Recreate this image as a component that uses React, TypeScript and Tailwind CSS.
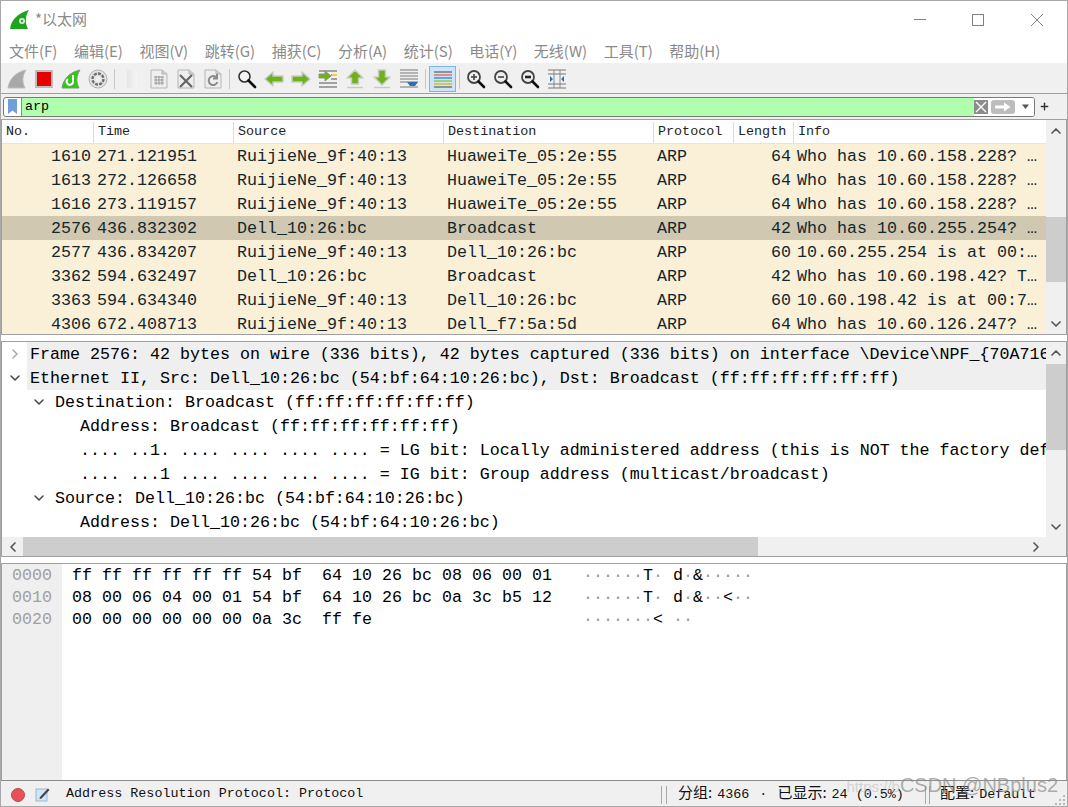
import React from "react";
import { ChevronLeft, ChevronRight, ChevronUp, ChevronDown, Plus } from "lucide-react";

const mono = "font-['Consolas','Liberation_Mono','DejaVu_Sans_Mono',monospace]";
const cols = ["w-[92px]", "w-[140px]", "w-[210px]", "w-[210px]", "w-[80px]", "w-[60px]"];

const packets: [string, string, string, string, string, string, string, boolean?][] = [
  ["1610", "271.121951", "RuijieNe_9f:40:13", "HuaweiTe_05:2e:55", "ARP", "64", "Who has 10.60.158.228? …"],
  ["1613", "272.126658", "RuijieNe_9f:40:13", "HuaweiTe_05:2e:55", "ARP", "64", "Who has 10.60.158.228? …"],
  ["1616", "273.119157", "RuijieNe_9f:40:13", "HuaweiTe_05:2e:55", "ARP", "64", "Who has 10.60.158.228? …"],
  ["2576", "436.832302", "Dell_10:26:bc", "Broadcast", "ARP", "42", "Who has 10.60.255.254? …", true],
  ["2577", "436.834207", "RuijieNe_9f:40:13", "Dell_10:26:bc", "ARP", "60", "10.60.255.254 is at 00:…"],
  ["3362", "594.632497", "Dell_10:26:bc", "Broadcast", "ARP", "42", "Who has 10.60.198.42? T…"],
  ["3363", "594.634340", "RuijieNe_9f:40:13", "Dell_10:26:bc", "ARP", "60", "10.60.198.42 is at 00:7…"],
  ["4306", "672.408713", "RuijieNe_9f:40:13", "Dell_f7:5a:5d", "ARP", "64", "Who has 10.60.126.247? …"],
];

const Shark = ({ color, dark }: { color: string; dark: string }) => (
  <svg width="20" height="20" viewBox="0 0 20 20">
    <path d="M1 19 C2 10 9 3 19 1 C15 7 15 13 18 19 Z" fill={color} stroke={dark} strokeWidth="1" />
  </svg>
);

const Doc = ({ children }: { children?: React.ReactNode }) => (
  <svg width="18" height="20" viewBox="0 0 18 20">
    <path d="M1 1 H12 L17 5 V19 H1 Z" fill="#eeeeee" stroke="#b5b5b5" />
    <path d="M12 1 V5 H17" fill="#cccccc" stroke="#b5b5b5" />
    {children}
  </svg>
);

const Arrow = ({ d }: { d: string }) => (
  <svg width="20" height="20" viewBox="0 0 20 20">
    <path d={d} fill="#6fb01e" stroke="#c9cdbd" strokeWidth="1.5" strokeLinejoin="round" />
  </svg>
);

const Lens = ({ sign }: { sign: "+" | "-" | "=" }) => (
  <svg width="20" height="20" viewBox="0 0 20 20">
    <circle cx="8" cy="8" r="6" fill="#eeeeee" stroke="#444444" strokeWidth="1.8" />
    <path d="M12.5 12.5 L18 18" stroke="#111111" strokeWidth="2.6" strokeLinecap="round" />
    <path d="M5 8 H11" stroke="#444444" strokeWidth="1.6" />
    {sign === "+" && <path d="M8 5 V11" stroke="#444444" strokeWidth="1.6" />}
    {sign === "=" && <path d="M5 8 H11" stroke="#222222" strokeWidth="2.6" />}
  </svg>
);

const Lines = ({ children }: { children?: React.ReactNode }) => (
  <svg width="20" height="20" viewBox="0 0 20 20">
    {[2, 6, 10, 14, 18].map((y) => (
      <path key={y} d={`M1 ${y} H19`} stroke="#555555" strokeWidth="1" />
    ))}
    {children}
  </svg>
);

const Btn = ({ children, active }: { children: React.ReactNode; active?: boolean }) => (
  <div className={`flex h-[26px] w-[27px] shrink-0 items-center justify-center ${active ? "border border-[#7eb4ea] bg-[#cde4f7]" : ""}`}>
    {children}
  </div>
);
const Sep = () => <div className="mx-[3px] h-[20px] w-px shrink-0 bg-[#c8c8c8]" />;

const Toolbar = () => (
  <div className="flex h-[30px] shrink-0 items-center border-b border-[#a0a0a0] bg-[#f0f0f0] pl-[2px]">
    <Btn><Shark color="#a8a8a8" dark="#bdbdbd" /></Btn>
    <Btn><div className="h-[18px] w-[18px] border-2 border-[#bdbdbd] bg-[#e60000]" /></Btn>
    <Btn>
      <svg width="20" height="20" viewBox="0 0 20 20">
        <path d="M1 19 C2 10 9 3 19 1 C15 7 15 13 18 19 Z" fill="#35c41e" stroke="#7a9b70" />
        <path d="M12 6 V12 A3.2 3.2 0 1 1 7 10" fill="none" stroke="#ffffff" strokeWidth="2" />
      </svg>
    </Btn>
    <Btn>
      <svg width="20" height="20" viewBox="0 0 20 20">
        <circle cx="10" cy="10" r="9" fill="#e4e4e4" stroke="#b0b0b0" />
        <circle cx="10" cy="10" r="5.5" fill="none" stroke="#6e6e6e" strokeWidth="2.4" strokeDasharray="3 1.2" />
        <circle cx="10" cy="10" r="2.6" fill="#efefef" />
      </svg>
    </Btn>
    <Sep />
    <Btn><div className="h-[18px] w-[10px] bg-gradient-to-r from-[#e6e6e6] to-[#f5f5f5]" /></Btn>
    <Btn>
      <Doc>
        <path d="M4 8 H14 M4 11 H14 M4 14 H14 M6 7 V16 M9 7 V16 M12 7 V16" stroke="#9a9a9a" strokeWidth="1" />
      </Doc>
    </Btn>
    <Btn>
      <Doc><path d="M3 6 L15 18 M15 6 L3 18" stroke="#666666" strokeWidth="2.2" /></Doc>
    </Btn>
    <Btn>
      <Doc><path d="M13 9 A4.5 4.5 0 1 0 13.5 13 M13 5 V9.5 H9" fill="none" stroke="#8a8a8a" strokeWidth="2" /></Doc>
    </Btn>
    <Sep />
    <Btn>
      <svg width="20" height="20" viewBox="0 0 20 20">
        <circle cx="7.5" cy="7.5" r="5.5" fill="#f4f4f4" stroke="#333333" strokeWidth="1.6" />
        <path d="M11.5 11.5 L18 18" stroke="#111111" strokeWidth="2.6" strokeLinecap="round" />
      </svg>
    </Btn>
    <Btn><Arrow d="M1 10 L9 3 V7 H19 V13 H9 V17 Z" /></Btn>
    <Btn><Arrow d="M19 10 L11 3 V7 H1 V13 H11 V17 Z" /></Btn>
    <Btn>
      <Lines>
        <rect x="1" y="3" width="12" height="8" fill="#f5f5f5" />
        <path d="M13 7 L7 2 V5 H1 V9 H7 V12 Z" fill="#6fb01e" stroke="#8a9a60" />
        <path d="M14 6 H19" stroke="#f1d23a" strokeWidth="2" />
      </Lines>
    </Btn>
    <Btn><Arrow d="M10 1 L18 9 H13.5 V15 H6.5 V9 H2 Z M2 18.5 H18" /></Btn>
    <Btn><Arrow d="M10 16 L18 8 H13.5 V1 H6.5 V8 H2 Z M2 18.5 H18" /></Btn>
    <Btn>
      <svg width="20" height="20" viewBox="0 0 20 20">
        {[1, 4, 7, 10, 13, 18].map((y) => (
          <path key={y} d={`M1 ${y} H19`} stroke="#777777" strokeWidth="1" />
        ))}
        <path d="M8 13 H19 L16 17 H11 Z" fill="#2f6fae" />
      </svg>
    </Btn>
    <Sep />
    <Btn active>
      <svg width="20" height="20" viewBox="0 0 20 20">
        <path d="M1 3 H19" stroke="#444444" strokeWidth="1" />
        <path d="M1 6 H19" stroke="#e06a5a" strokeWidth="1.4" />
        <path d="M1 9 H19" stroke="#3f86c8" strokeWidth="1.4" />
        <path d="M1 12 H19" stroke="#8ac63a" strokeWidth="1.4" />
        <path d="M1 15 H19" stroke="#dbb62c" strokeWidth="1.4" />
        <path d="M1 18 H19" stroke="#444444" strokeWidth="1" />
      </svg>
    </Btn>
    <div className="ml-[3px] mr-[2px] h-[20px] w-px shrink-0 bg-[#c8c8c8]" />
    <Btn><Lens sign="+" /></Btn>
    <Btn><Lens sign="-" /></Btn>
    <Btn><Lens sign="=" /></Btn>
    <Btn>
      <svg width="20" height="20" viewBox="0 0 20 20">
        {[1, 5, 15, 19].map((y) => (
          <path key={y} d={`M1 ${y} H19`} stroke="#777777" strokeWidth="1" />
        ))}
        <path d="M7 1 V19 M13 1 V19" stroke="#8a8a8a" strokeWidth="1" />
        <path d="M3 7 L6 10 L3 13 Z M17 7 L14 10 L17 13 Z" fill="#2f6fae" />
      </svg>
    </Btn>
  </div>
);

const FilterBar = () => (
  <div className="flex h-[25px] shrink-0 items-center bg-[#f0f0f0] pl-[2px]">
    <div className="flex h-[20px] w-[1032px] items-stretch overflow-hidden rounded-[3px] border border-[#7a7a7a] bg-white">
      <div className="flex w-[18px] shrink-0 items-center justify-center border-r border-[#8a8a8a]">
        <svg width="9" height="15" viewBox="0 0 9 15"><path d="M0 0 H9 V15 L4.5 11.5 L0 15 Z" fill="#6f9fd8" /></svg>
      </div>
      <div className="flex flex-1 items-center bg-[#afffaf] pl-[3px] pt-[1px] text-[13.4px] text-black font-['Liberation_Mono',monospace]">arp</div>
      <div className="flex w-[60px] shrink-0 items-center bg-white">
        <div className="flex h-[14px] w-[14px] items-center justify-center bg-[#8c8c8c]">
          <svg width="12" height="12" viewBox="0 0 12 12"><path d="M1 1 L11 11 M11 1 L1 11" stroke="#ffffff" strokeWidth="1.4" /></svg>
        </div>
        <div className="ml-[3px] flex h-[14px] w-[24px] items-center justify-center rounded-[3px] bg-[#bdbdbd]">
          <svg width="16" height="10" viewBox="0 0 16 10"><path d="M0 3.5 H9 V0.5 L15.5 5 L9 9.5 V6.5 H0 Z" fill="#ffffff" /></svg>
        </div>
        <svg className="ml-[6px]" width="9" height="6" viewBox="0 0 9 6"><path d="M1 0.5 H8 L4.5 5 Z" fill="#555555" /></svg>
      </div>
    </div>
    <Plus size={11} strokeWidth={3} className="ml-[4px] text-[#333333]" />
  </div>
);

const VScroll = ({ spacer, thumb }: { spacer: string; thumb: string }) => (
  <div className="flex w-[20px] shrink-0 flex-col bg-[#f0f0f0]">
    <div className="flex h-[22px] shrink-0 items-center justify-center"><ChevronUp size={16} strokeWidth={2.5} className="text-[#555555]" /></div>
    <div className={`${spacer} shrink-0`} />
    <div className={`${thumb} shrink-0 bg-[#cdcdcd]`} />
    <div className="flex-1" />
    <div className="flex h-[20px] shrink-0 items-center justify-center"><ChevronDown size={16} strokeWidth={2.5} className="text-[#555555]" /></div>
  </div>
);

const PacketList = () => (
  <div className="flex h-[216px] shrink-0 border border-[#a0a0a0] bg-white">
    <div className="min-w-0 flex-1 overflow-hidden">
      <div className="flex h-[24px] border-b border-[#e4e4e4] pt-[2px] text-[13.4px] text-[#222222] font-['Liberation_Mono',monospace]">
        {["No.", "Time", "Source", "Destination", "Protocol", "Length"].map((h, i) => (
          <div key={h} className={`${cols[i]} flex shrink-0 items-center border-r border-[#dcdcdc] pl-[4px]`}>{h}</div>
        ))}
        <div className="flex flex-1 items-center pl-[4px]">Info</div>
      </div>
      {packets.map((p) => (
        <div key={p[0]} className={`flex h-[24px] items-center whitespace-pre text-[16.67px] text-[#12272e] ${mono} ${p[7] ? "bg-[#d0c8b0]" : "bg-[#faf0d7]"}`}>
          <div className={`${cols[0]} shrink-0 pr-[3px] text-right`}>{p[0]}</div>
          <div className={`${cols[1]} shrink-0 pl-[3px]`}>{p[1]}</div>
          <div className={`${cols[2]} shrink-0 pl-[3px]`}>{p[2]}</div>
          <div className={`${cols[3]} shrink-0 pl-[3px]`}>{p[3]}</div>
          <div className={`${cols[4]} shrink-0 pl-[3px]`}>{p[4]}</div>
          <div className={`${cols[5]} shrink-0 pr-[3px] text-right`}>{p[5]}</div>
          <div className="min-w-0 flex-1 pl-[3px]">{p[6]}</div>
        </div>
      ))}
    </div>
    <VScroll spacer="h-[75px]" thumb="h-[65px]" />
  </div>
);

const details: { text: string; level: number; open?: boolean; hl?: boolean }[] = [
  { text: "Frame 2576: 42 bytes on wire (336 bits), 42 bytes captured (336 bits) on interface \\Device\\NPF_{70A716", level: 0, open: false, hl: true },
  { text: "Ethernet II, Src: Dell_10:26:bc (54:bf:64:10:26:bc), Dst: Broadcast (ff:ff:ff:ff:ff:ff)", level: 0, open: true, hl: true },
  { text: "Destination: Broadcast (ff:ff:ff:ff:ff:ff)", level: 1, open: true },
  { text: "Address: Broadcast (ff:ff:ff:ff:ff:ff)", level: 2 },
  { text: ".... ..1. .... .... .... .... = LG bit: Locally administered address (this is NOT the factory def", level: 2 },
  { text: ".... ...1 .... .... .... .... = IG bit: Group address (multicast/broadcast)", level: 2 },
  { text: "Source: Dell_10:26:bc (54:bf:64:10:26:bc)", level: 1, open: true },
  { text: "Address: Dell_10:26:bc (54:bf:64:10:26:bc)", level: 2 },
];
const levelPad = ["pl-[5px]", "pl-[29px]", "pl-[29px]"];
const levelText = ["w-[23px]", "w-[24px]", "w-[49px]"];

const Details = () => (
  <div className="mt-[6px] flex h-[216px] shrink-0 flex-col border border-[#a0a0a0] bg-white">
    <div className="flex min-h-0 flex-1">
      <div className="min-w-0 flex-1 overflow-hidden">
        {details.map((d, i) => (
          <div key={i} className={`flex h-[24px] items-center whitespace-pre text-[16.67px] text-[#000000] ${mono} ${levelPad[d.level]}`}>
            <div className={`${levelText[d.level]} flex shrink-0 items-center`}>
              {d.open === true && <ChevronDown size={16} strokeWidth={2.2} className="text-[#444444]" />}
              {d.open === false && <ChevronRight size={16} strokeWidth={2.2} className="text-[#a8a8a8]" />}
            </div>
            <div className={`min-w-0 flex-1 overflow-hidden ${d.hl ? "-ml-[3px] flex h-full items-center bg-[#efefef] pl-[3px]" : ""}`}>{d.text}</div>
          </div>
        ))}
      </div>
      <VScroll spacer="h-0" thumb="h-[86px]" />
    </div>
    <div className="flex h-[19px] shrink-0 bg-[#f0f0f0]">
      <div className="flex w-[21px] shrink-0 items-center justify-center"><ChevronLeft size={16} strokeWidth={2.5} className="text-[#555555]" /></div>
      <div className="w-[735px] shrink-0 bg-[#cdcdcd]" />
      <div className="flex-1" />
      <div className="flex w-[20px] shrink-0 items-center justify-center"><ChevronRight size={16} strokeWidth={2.5} className="text-[#555555]" /></div>
      <div className="w-[20px] shrink-0" />
    </div>
  </div>
);

const hexRows: [string, string, string][] = [
  ["0000", "ff ff ff ff ff ff 54 bf", "64 10 26 bc 08 06 00 01"],
  ["0010", "08 00 06 04 00 01 54 bf", "64 10 26 bc 0a 3c b5 12"],
  ["0020", "00 00 00 00 00 00 0a 3c", "ff fe"],
];
const asciiRows = ["······T· d·&·····", "······T· d·&··<··", "·······< ··"];

const Hex = () => (
  <div className="mt-[6px] flex min-h-0 flex-1 flex-col border-x border-t border-[#a0a0a0] bg-white">
    <div className="flex min-h-0 flex-1">
      <div className="w-[60px] shrink-0 bg-[#efefef] pl-[10px] pt-[1px]">
        {hexRows.map((r) => (
          <div key={r[0]} className={`h-[22px] text-[16.67px] leading-[22px] text-[#a0a0a0] ${mono}`}>{r[0]}</div>
        ))}
      </div>
      <div className="min-w-0 flex-1 pl-[10px] pt-[1px]">
        {hexRows.map((r, i) => (
          <div key={r[0]} className={`flex h-[22px] whitespace-pre text-[16.67px] leading-[22px] text-[#000000] ${mono}`}>
            <div className="w-[250px] shrink-0">{r[1]}</div>
            <div className="w-[261px] shrink-0">{r[2]}</div>
            <div>
              {asciiRows[i].split("").map((c, j) => (
                <span key={j} className={c === "·" ? "text-[#9a9a9a]" : "text-[#000000]"}>{c}</span>
              ))}
            </div>
          </div>
        ))}
      </div>
    </div>
  </div>
);

const Cjk = ({ children }: { children: React.ReactNode }) => (
  <span className="font-['Noto_Sans_CJK_SC',sans-serif] text-[15px] leading-[18px]">{children}</span>
);

const StatusBar = () => (
  <div className="relative flex h-[26px] shrink-0 items-center border-t border-[#8c8c8c] bg-[#f0f0f0] pt-[2px] text-[13.4px] text-[#111111] font-['Liberation_Mono',monospace]">
    <div className="ml-[10px] h-[14px] w-[14px] rounded-full border border-[#b84a4a] bg-[#e8505a]" />
    <div className="ml-[10px] w-[16px] shrink-0">
      <svg width="15" height="15" viewBox="0 0 15 15">
        <rect x="1" y="2" width="11" height="12" fill="#cfe4f5" stroke="#9ab8d0" />
        <path d="M5 10 L13 1.5 L14.5 3 L6.5 11.5 L4.5 12 Z" fill="#444444" />
      </svg>
    </div>
    <div className="ml-[15px] w-[595px] shrink-0 whitespace-pre">Address Resolution Protocol: Protocol</div>
    <div className="h-[18px] w-[6px] shrink-0 border-x border-[#a8a8a8]" />
    <div className="ml-[11px] flex w-[247px] shrink-0 items-baseline whitespace-pre">
      <Cjk>分组:</Cjk><span className="ml-[5px]">4366</span><span className="mx-[10px]">·</span><Cjk>已显示:</Cjk><span className="ml-[5px]">24 (0.5%)</span>
    </div>
    <div className="h-[18px] w-[5px] shrink-0 border-x border-[#a8a8a8]" />
    <div className="ml-[10px] flex items-baseline whitespace-pre"><Cjk>配置:</Cjk><span className="ml-[5px]">Default</span></div>
    <div className="pointer-events-none absolute right-[9px] top-[-10px] flex items-baseline font-['Liberation_Sans',sans-serif] leading-[28px]">
      <span className="text-[15px] text-[#b4b4b4]/50">https://b</span>
      <span className="text-[20px] text-[#8c8c8c]/70">CSDN @NBplus2</span>
    </div>
    <svg className="absolute bottom-[1px] right-[1px]" width="12" height="12" viewBox="0 0 12 12">
      <path d="M9 2 h2 v2 h-2 Z M5 6 h2 v2 h-2 Z M9 6 h2 v2 h-2 Z M1 10 h2 v2 h-2 Z M5 10 h2 v2 h-2 Z M9 10 h2 v2 h-2 Z" fill="#b8b8b8" />
    </svg>
  </div>
);

const menus = ["文件(F)", "编辑(E)", "视图(V)", "跳转(G)", "捕获(C)", "分析(A)", "统计(S)", "电话(Y)", "无线(W)", "工具(T)", "帮助(H)"];

export default function App() {
  return (
    <div className="flex h-[807px] w-[1068px] flex-col overflow-hidden border border-[#a8a8a8] bg-white font-['Noto_Sans_CJK_SC',sans-serif]">
      <div className="flex h-[37px] shrink-0 items-center pl-[9px]">
        <svg width="20" height="20" viewBox="0 0 20 20">
          <path d="M0 19 C1 10 8 3 19 0 C15 6 15 13 18 19 Z" fill="#1ea51e" />
          <circle cx="12" cy="11" r="3" fill="#d8efd8" />
          <circle cx="12" cy="11" r="1.2" fill="#1ea51e" />
        </svg>
        <span className="ml-[5px] text-[15px] text-[#8a8a8a]">*以太网</span>
        <div className="flex-1" />
        <svg width="140" height="14" viewBox="0 0 140 14" className="mr-[19px]">
          <path d="M6 6.5 H18" stroke="#808080" />
          <rect x="64.5" y="1.5" width="11" height="11" fill="none" stroke="#808080" />
          <path d="M123 1 L135 13 M135 1 L123 13" stroke="#808080" />
        </svg>
      </div>
      <div className="flex h-[26px] shrink-0 items-center gap-[16.5px] border-b border-[#f0f0f0] pl-[8px] pt-[2px] text-[15px] text-[#8a8a8a]">
        {menus.map((m) => (
          <span key={m}>{m}</span>
        ))}
      </div>
      <Toolbar />
      <FilterBar />
      <PacketList />
      <Details />
      <Hex />
      <StatusBar />
    </div>
  );
}
